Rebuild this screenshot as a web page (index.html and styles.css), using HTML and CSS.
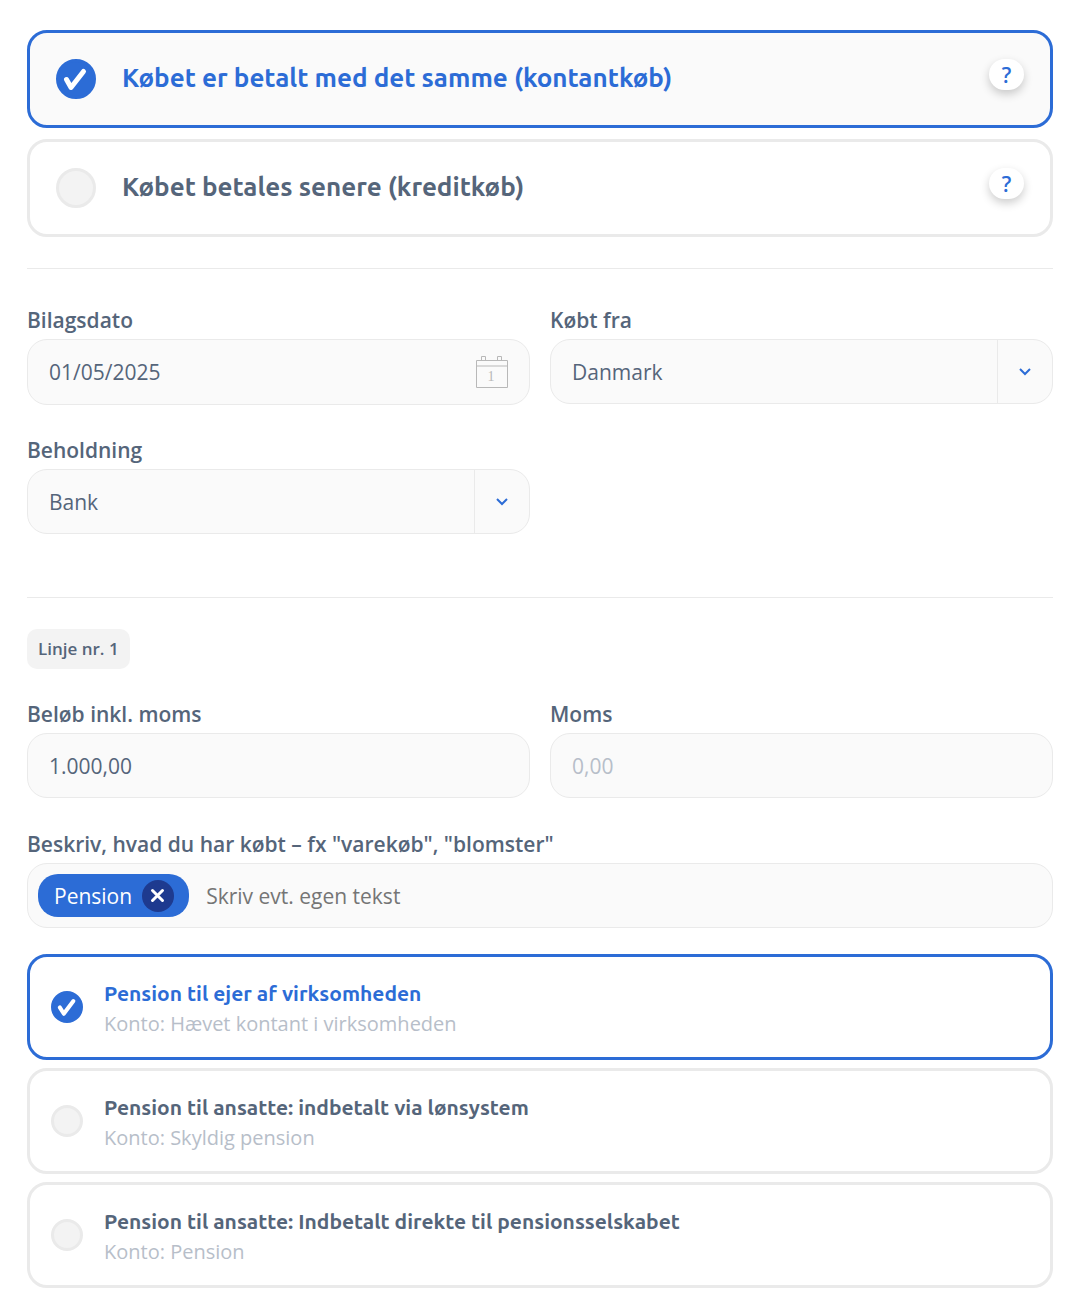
FILE: index.html
```html
<!DOCTYPE html>
<html lang="da">
<head>
<meta charset="utf-8">
<meta name="viewport" content="width=device-width, initial-scale=1">
<title>Registrer køb</title>
<link rel="stylesheet" href="styles.css">
</head>
<body>
<form class="page">
  <div class="payment" role="radiogroup" aria-label="Betaling">
    <div class="option option--filled option--selected">
      <span class="tick tick--large">
        <input class="tick__input" type="radio" name="payment" id="pay-now" checked>
        <svg class="tick__mark" viewBox="0 0 40 40" aria-hidden="true"><path d="M10.500 20.500 15 28.500 27.500 12.500"/></svg>
      </span>
      <label class="option__title" for="pay-now">Købet er betalt med det samme (kontantkøb)</label>
      <button class="help" type="button">?</button>
    </div>
    <div class="option">
      <span class="tick tick--large">
        <input class="tick__input" type="radio" name="payment" id="pay-later">
      </span>
      <label class="option__title" for="pay-later">Købet betales senere (kreditkøb)</label>
      <button class="help" type="button">?</button>
    </div>
  </div>

  <div class="section section--details">
    <div class="field">
      <label class="field__label" for="date">Bilagsdato</label>
      <div class="box box--date">
        <input class="box__input" type="text" id="date" value="01/05/2025">
        <svg class="calendar" viewBox="0 0 34 34" aria-hidden="true">
          <path d="M1.500 5.500h31v27h-31zM1.500 11h31M6.500 5V1.500h4V5M22.500 5V1.500h4V5"/>
          <text x="16" y="26" text-anchor="middle">1</text>
        </svg>
      </div>
    </div>
    <div class="field">
      <label class="field__label" for="country">Købt fra</label>
      <div class="box box--select">
        <select class="box__select" id="country"><option>Danmark</option></select>
        <span class="box__arrow"><svg class="chevron" viewBox="0 0 12 8" aria-hidden="true"><path d="M1 1 6 6l5-5"/></svg></span>
      </div>
    </div>
    <div class="field">
      <label class="field__label" for="holding">Beholdning</label>
      <div class="box box--select">
        <select class="box__select" id="holding"><option>Bank</option></select>
        <span class="box__arrow"><svg class="chevron" viewBox="0 0 12 8" aria-hidden="true"><path d="M1 1 6 6l5-5"/></svg></span>
      </div>
    </div>
  </div>

  <div class="section section--line">
    <span class="badge">Linje nr. 1</span>
    <div class="field">
      <label class="field__label" for="amount">Beløb inkl. moms</label>
      <div class="box"><input class="box__input" type="text" id="amount" value="1.000,00"></div>
    </div>
    <div class="field">
      <label class="field__label" for="vat">Moms</label>
      <div class="box"><input class="box__input box__input--faint" type="text" id="vat" placeholder="0,00"></div>
    </div>
    <div class="field field--wide">
      <label class="field__label" for="text">Beskriv, hvad du har købt – fx "varekøb", "blomster"</label>
      <div class="box box--tags">
        <span class="tag">Pension
          <button class="tag__remove" type="button" aria-label="Fjern Pension"><svg viewBox="0 0 32 32" aria-hidden="true"><path d="m10.500 10.500 10 10m0-10-10 10"/></svg></button>
        </span>
        <input class="box__input" type="text" id="text" placeholder="Skriv evt. egen tekst">
      </div>
    </div>
  </div>

  <div class="accounts" role="radiogroup" aria-label="Konto">
    <div class="option option--compact option--selected">
      <span class="tick">
        <input class="tick__input" type="radio" name="account" id="owner" checked>
        <svg class="tick__mark" viewBox="0 0 40 40" aria-hidden="true"><path d="M11 20.500 16 28.500 28 12.500"/></svg>
      </span>
      <label class="option__text" for="owner"><strong class="option__name">Pension til ejer af virksomheden</strong><span class="option__note">Konto: Hævet kontant i virksomheden</span></label>
    </div>
    <div class="option option--compact">
      <span class="tick"><input class="tick__input" type="radio" name="account" id="payroll"></span>
      <label class="option__text" for="payroll"><strong class="option__name">Pension til ansatte: indbetalt via lønsystem</strong><span class="option__note">Konto: Skyldig pension</span></label>
    </div>
    <div class="option option--compact">
      <span class="tick"><input class="tick__input" type="radio" name="account" id="direct"></span>
      <label class="option__text" for="direct"><strong class="option__name">Pension til ansatte: Indbetalt direkte til pensionsselskabet</strong><span class="option__note">Konto: Pension</span></label>
    </div>
  </div>
</form>
</body>
</html>
```
FILE: styles.css
```css
:root {
  --blue: #2c6cd6;
  --navy: #1e3a8f;
  --text: #55657a;
  --faint: #b7bec9;
  --line: #eaeaea;
  --fill: #fafafa;
  --body: "Open Sans", "Noto Sans", sans-serif;
  --title: Ubuntu, "Noto Sans", "Open Sans", sans-serif;
}

* {
  box-sizing: border-box;
}

body {
  margin: 0;
  background: #fff;
  color: var(--text);
  font: 400 21px/30px var(--body);
}

input,
select,
button {
  margin: 0;
  padding: 0;
  border: 0;
  background: none;
  color: inherit;
  font: inherit;
}

svg {
  fill: none;
  stroke: currentColor;
}

.page {
  padding: 30px 27px 18px;
}

.payment {
  display: grid;
  gap: 11px;
}

.accounts {
  display: grid;
  gap: 8px;
  margin-top: 26px;
}

/* Choice cards */
.option {
  display: flex;
  align-items: center;
  gap: 26px;
  padding: 26px;
  border: 3px solid var(--line);
  border-radius: 20px;
}

.option--filled {
  background: var(--fill);
}

.option--compact {
  gap: 21px;
  padding: 18px 21px;
}

.option--selected {
  border-color: var(--blue);
}

.option__title {
  flex: 1;
  padding-bottom: 2px;
  font: 700 26px/38px var(--title);
}

.option__text {
  display: grid;
  flex: 1;
  gap: 2px;
  padding-top: 4px;
}

.option__name {
  font: 700 21px/28px var(--title);
}

.option--selected .option__title,
.option--selected .option__name {
  color: var(--blue);
}

.option__note {
  color: var(--faint);
  font-size: 20px;
}

.tick {
  display: grid;
  width: 32px;
  height: 32px;
}

.tick--large {
  width: 40px;
  height: 40px;
}

.tick__input,
.tick__mark {
  grid-area: 1 / 1;
  width: 100%;
  height: 100%;
}

.tick__input {
  appearance: none;
  border: 3px solid var(--line);
  border-radius: 50%;
  background: #f3f3f3;
}

.tick__input:checked {
  border-color: var(--blue);
  background: var(--blue);
}

.tick__mark {
  color: #fff;
  stroke-width: 5;
  stroke-linecap: round;
  stroke-linejoin: round;
  pointer-events: none;
}

.help {
  align-self: flex-start;
  width: 35px;
  height: 31px;
  border-radius: 16px;
  background: #fff;
  box-shadow: 0 4px 10px rgb(0 0 0 / 20%);
  color: var(--blue);
  font-weight: 600;
}

/* Form sections */
.section {
  display: grid;
  grid-template-columns: 1fr 1fr;
  column-gap: 20px;
  border-top: 1px solid var(--line);
}

.section--details {
  row-gap: 31px;
  margin-top: 31px;
  padding: 37px 0 63px;
}

.section--line {
  row-gap: 32px;
  padding-top: 31px;
}

.field {
  display: grid;
  align-content: start;
}

.field--wide {
  grid-column: 1 / -1;
}

.field__label {
  height: 33px;
  font-weight: 600;
  line-height: 28px;
}

.badge {
  grid-column: 1 / -1;
  justify-self: start;
  margin-bottom: -1px;
  padding: 5px 11px;
  border-radius: 10px;
  background: #f3f3f3;
  font-size: 17px;
  font-weight: 600;
}

.box {
  display: flex;
  align-items: center;
  min-height: 65px;
  padding: 0 21px;
  border: 1px solid var(--line);
  border-radius: 20px;
  background: var(--fill);
}

.box--date {
  min-height: 66px;
  padding-right: 20px;
}

.box__input {
  flex: 1;
  min-width: 0;
}

.box__input::placeholder {
  color: #757575;
}

.box__input--faint::placeholder {
  color: var(--faint);
}

.calendar {
  width: 34px;
  height: 34px;
  color: #b8b8b8;
}

.calendar text {
  fill: currentColor;
  stroke: none;
  font: 14px "Liberation Serif", serif;
}

.box--select {
  display: grid;
  grid-template-columns: 1fr 55px;
  align-items: stretch;
  padding: 0;
}

.box__select {
  grid-area: 1 / 1 / 2 / 3;
  appearance: none;
  padding: 0 75px 0 21px;
}

.box__arrow {
  display: grid;
  grid-area: 1 / 2;
  place-items: center;
  border-left: 1px solid var(--line);
  pointer-events: none;
}

.chevron {
  width: 12px;
  height: 8px;
  color: var(--blue);
  stroke-width: 2;
}

.box--tags {
  gap: 17px;
  padding: 0 10px;
}

.tag {
  display: flex;
  align-items: center;
  gap: 10px;
  height: 43px;
  padding: 0 15px 0 16px;
  border-radius: 20px;
  background: var(--blue);
  color: #fff;
}

.tag__remove {
  display: grid;
  width: 32px;
  height: 32px;
  border-radius: 50%;
  background: var(--navy);
  stroke-width: 3;
  stroke-linecap: round;
}
```
